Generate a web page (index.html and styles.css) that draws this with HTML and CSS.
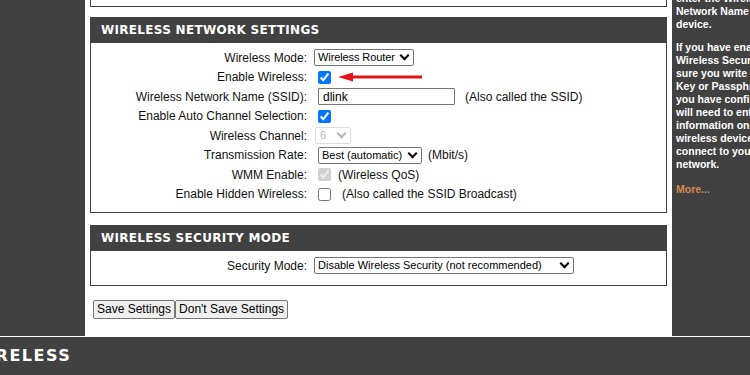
FILE: index.html
```html
<!DOCTYPE html>
<html lang="en">
<head>
<meta charset="utf-8">
<title>Wireless Settings</title>
<link rel="stylesheet" href="styles.css">
</head>
<body>
<div class="page">
  <div class="left-nav"></div>
  <div class="main">
    <div class="box box-top"></div>

    <section class="box">
      <h2 class="box-title">WIRELESS NETWORK SETTINGS</h2>
      <div class="form">
        <div class="row">
          <label class="lbl">Wireless Mode:</label>
          <div class="ctl">
            <span class="sel-wrap"><select class="sel sel-mode"><option>Wireless Router</option></select></span>
          </div>
        </div>
        <div class="row">
          <label class="lbl">Enable Wireless:</label>
          <div class="ctl">
            <input type="checkbox" class="chk" checked>
            <svg class="arrow" width="84" height="10" viewBox="0 0 84 10" aria-hidden="true">
              <polygon points="0,5 15,0.5 15,9.5" fill="#e3151a"/>
              <rect x="14" y="3.5" width="70" height="3" fill="#e3151a"/>
            </svg>
          </div>
        </div>
        <div class="row">
          <label class="lbl">Wireless Network Name (SSID):</label>
          <div class="ctl">
            <input type="text" class="txt" value="dlink">
            <span class="note note-ssid">(Also called the SSID)</span>
          </div>
        </div>
        <div class="row">
          <label class="lbl">Enable Auto Channel Selection:</label>
          <div class="ctl">
            <input type="checkbox" class="chk" checked>
          </div>
        </div>
        <div class="row">
          <label class="lbl">Wireless Channel:</label>
          <div class="ctl">
            <span class="sel-wrap sel-wrap-disabled sel-wrap-channel"><select class="sel sel-channel" disabled><option>6</option></select></span>
          </div>
        </div>
        <div class="row">
          <label class="lbl">Transmission Rate:</label>
          <div class="ctl">
            <span class="sel-wrap sel-wrap-rate"><select class="sel sel-rate"><option>Best (automatic)</option></select></span>
            <span class="note note-rate">(Mbit/s)</span>
          </div>
        </div>
        <div class="row">
          <label class="lbl">WMM Enable:</label>
          <div class="ctl">
            <input type="checkbox" class="chk" checked disabled>
            <span class="note note-wmm">(Wireless QoS)</span>
          </div>
        </div>
        <div class="row">
          <label class="lbl">Enable Hidden Wireless:</label>
          <div class="ctl">
            <input type="checkbox" class="chk">
            <span class="note note-hidden">(Also called the SSID Broadcast)</span>
          </div>
        </div>
      </div>
    </section>

    <section class="box box-security">
      <h2 class="box-title">WIRELESS SECURITY MODE</h2>
      <div class="form form-security">
        <div class="row">
          <label class="lbl">Security Mode:</label>
          <div class="ctl">
            <span class="sel-wrap"><select class="sel sel-security"><option>Disable Wireless Security (not recommended)</option></select></span>
          </div>
        </div>
      </div>
    </section>

    <div class="actions">
      <button class="btn" type="button">Save Settings</button>
      <button class="btn" type="button">Don't Save Settings</button>
    </div>
  </div>
  <aside class="help">
    <p class="help-text">enter the Wireless<br>Network Name on your<br>device.</p>
    <p class="help-text">If you have enabled<br>Wireless Security, make<br>sure you write down the<br>Key or Passphrase that<br>you have configured. You<br>will need to enter this<br>information on any<br>wireless device that you<br>connect to your wireless<br>network.</p>
    <p class="help-text help-more">More...</p>
  </aside>
</div>
<footer class="footer">
  <span class="brand">WIRELESS</span>
</footer>
</body>
</html>
```

FILE: styles.css
```css
html, body {
  margin: 0;
  padding: 0;
}

body {
  width: 750px;
  height: 375px;
  overflow: hidden;
  background: #ffffff;
  font-family: "Liberation Sans", Arial, sans-serif;
  font-size: 12px;
  color: #111;
}

.page {
  display: flex;
  height: 336px;
  background: #ffffff;
}

.left-nav {
  width: 85px;
  flex-shrink: 0;
  background: #414141;
}

.main {
  width: 587px;
  flex-shrink: 0;
  box-sizing: border-box;
  padding: 0 5px;
  background: #ffffff;
}

.box {
  border: 1px solid #404040;
  margin-top: 10px;
}

.box-top {
  height: 6px;
  border-top: 0;
  margin-top: 0;
}

.box-security {
  margin-top: 12px;
}

.box-title {
  margin: 0;
  height: 25px;
  line-height: 25px;
  padding-left: 10px;
  background: #414141;
  color: #ffffff;
  font-family: "DejaVu Sans", Verdana, sans-serif;
  font-weight: bold;
  font-size: 12px;
  letter-spacing: 0.3px;
}

.form {
  padding: 5px 0 8px;
}

.form-security {
  padding: 5px 0 9px;
}

.row {
  display: grid;
  grid-template-columns: 216px auto;
  column-gap: 7px;
  align-items: center;
  height: 19.5px;
}

.lbl {
  text-align: right;
  white-space: nowrap;
  color: #111;
}

.ctl {
  display: flex;
  align-items: center;
  white-space: nowrap;
}

.sel-wrap {
  position: relative;
  display: inline-flex;
}

.sel-wrap::after {
  content: "";
  position: absolute;
  right: 6px;
  top: 3px;
  width: 5px;
  height: 5px;
  border-right: 2px solid #000;
  border-bottom: 2px solid #000;
  transform: rotate(45deg);
  pointer-events: none;
}

.sel-wrap-disabled::after {
  border-color: #b5b5b5;
}

.sel-wrap-channel { margin-left: 1px; }
.sel-wrap-rate { margin-left: 4px; }

.sel {
  -webkit-appearance: none;
  appearance: none;
  box-sizing: border-box;
  font-family: "Liberation Sans", Arial, sans-serif;
  font-size: 11px;
  line-height: 15px;
  height: 17px;
  margin: 0;
  padding: 0 14px 0 3px;
  border: 1px solid #767676;
  border-radius: 2px;
  background: #ffffff;
  color: #000;
}

.sel-mode { width: 100px; letter-spacing: -0.1px; }
.sel-channel { width: 36px; padding-left: 4px; color: #9a9a9a; border-color: #d0d0d0; }
.sel-rate { width: 104px; }
.sel-security { width: 260px; }

.chk {
  width: 13px;
  height: 13px;
  margin: 3px 3px 3px 4px;
}

.txt {
  box-sizing: border-box;
  width: 137px;
  height: 17px;
  margin: 0 0 0 4px;
  padding: 0 0 0 4px;
  border: 1px solid #767676;
  border-radius: 1px;
  font-family: "Liberation Sans", Arial, sans-serif;
  font-size: 12px;
  color: #000;
}

.note { color: #111; }
.note-ssid { margin-left: 10px; }
.note-rate { margin-left: 6px; }
.note-wmm { margin-left: 4px; }
.note-hidden { margin-left: 8px; }

.arrow {
  margin-left: 4px;
  display: block;
}

.actions {
  display: flex;
  gap: 0;
  margin: 14px 0 0 3px;
}

.btn {
  font-family: "Liberation Sans", Arial, sans-serif;
  font-size: 12px;
  height: 19px;
  padding: 0 3px;
  margin: 0;
  color: #000;
  background: #efefef;
  border: 1px solid #767676;
  border-radius: 2px;
}

.help {
  width: 78px;
  flex-shrink: 0;
  overflow: hidden;
  background: #414141;
  color: #ffffff;
  padding-left: 4px;
  box-sizing: border-box;
}

.help-text {
  margin: 0 0 10px;
  white-space: nowrap;
  font-family: "Liberation Sans", Arial, sans-serif;
  font-weight: bold;
  font-size: 10.5px;
  line-height: 13px;
}

.help-text:first-child {
  margin-top: -8px;
}

.help-more {
  margin-top: 12px;
  color: #d6874d;
}

.footer {
  margin-top: 1px;
  height: 38px;
  background: #414141;
  overflow: hidden;
}

.brand {
  display: inline-block;
  margin-left: -31px;
  line-height: 38px;
  color: #ffffff;
  font-family: "DejaVu Sans", Verdana, sans-serif;
  font-weight: bold;
  font-size: 16px;
  letter-spacing: 1.5px;
}
```
